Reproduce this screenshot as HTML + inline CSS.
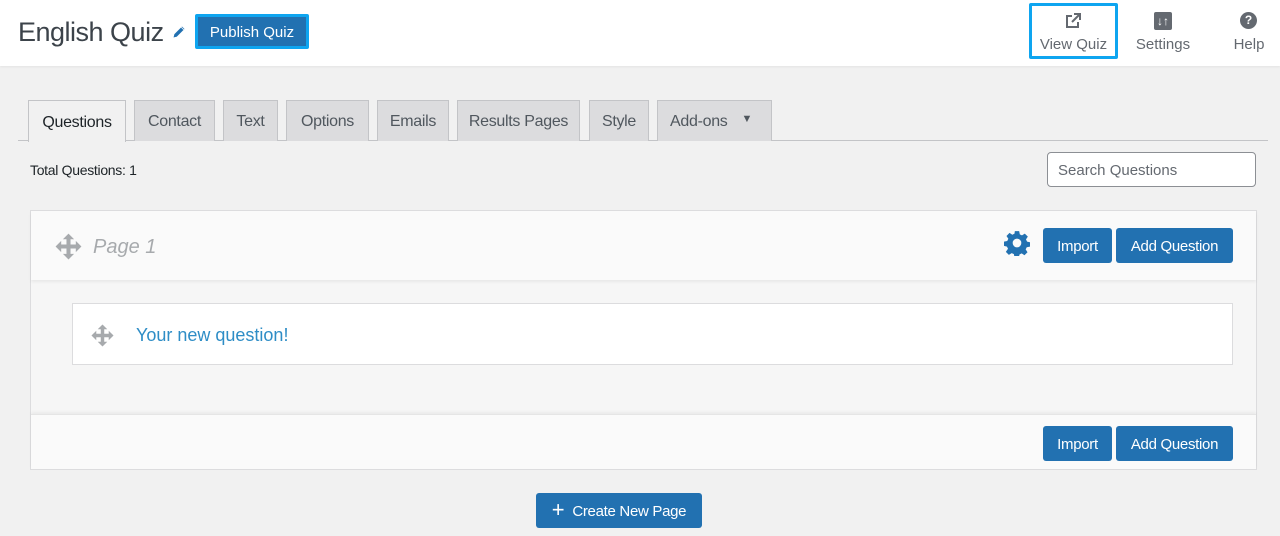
<!DOCTYPE html>
<html><head><meta charset="utf-8"><style>
*{box-sizing:border-box;margin:0;padding:0}
body{width:1280px;height:536px;background:#f1f1f1;font-family:"Liberation Sans",sans-serif;position:relative;overflow:hidden;color:#3c434a}
.a{position:absolute}
.hdr{left:0;top:0;width:1280px;height:66px;background:#fff;box-shadow:0 1px 2px rgba(0,0,0,.06)}
.tab{position:absolute;top:100px;height:41px;background:#dcdcde;border:1px solid #c3c4c7;border-bottom:none;font-size:16px;color:#50575e;display:flex;align-items:center;justify-content:center;letter-spacing:-0.3px;padding-top:2px}
.btn{position:absolute;background:#2271b1;color:#fff;border-radius:3px;font-size:15px;display:flex;align-items:center;justify-content:center;letter-spacing:-0.3px;padding-top:2px}
.hi{position:absolute;text-align:center;font-size:15px;color:#646970}
</style></head><body>
<div class="a hdr"></div>
<div class="a" style="left:18px;top:17px;font-size:27px;color:#3c434a;letter-spacing:-0.5px">English Quiz</div>
<svg class="a" style="left:171px;top:24px" width="16" height="16" viewBox="0 0 16 16"><path d="M2 14l1-4 8-8 3 3-8 8z M10 3l3 3" fill="#2271b1" stroke="#fff" stroke-width="0.8"/></svg>
<div class="a" style="left:195px;top:14px;width:114px;height:35px;border:3px solid #0ea5f0;border-radius:2px;background:#2271b1;color:#fff;font-size:15px;display:flex;align-items:center;justify-content:center;padding-top:2px">Publish Quiz</div>
<div class="a" style="left:1029px;top:3px;width:89px;height:56px;border:3px solid #0ea5f0;border-radius:2px"></div>
<svg class="a" style="left:1064px;top:12px" width="18" height="18" viewBox="0 0 18 18"><path d="M8 4H3v11h11v-5" fill="none" stroke="#646970" stroke-width="2"/><path d="M10 2h6v6M16 2l-8 8" fill="none" stroke="#646970" stroke-width="2"/></svg>
<div class="hi" style="left:1030px;top:36px;width:87px">View Quiz</div>
<div class="a" style="left:1154px;top:12px;width:18px;height:18px;background:#646970;border-radius:2px;color:#fff;font-size:12px;text-align:center;line-height:18px;font-weight:bold">↓↑</div>
<div class="hi" style="left:1122px;top:36px;width:82px">Settings</div>
<div class="a" style="left:1240px;top:12px;width:17px;height:17px;background:#646970;border-radius:50%;color:#fff;font-size:12px;text-align:center;line-height:17px;font-weight:bold">?</div>
<div class="hi" style="left:1220px;top:36px;width:58px">Help</div>

<div class="a" style="left:18px;top:140px;width:1250px;height:1px;background:#c3c4c7"></div>
<div class="tab" style="left:28px;width:98px;background:#f1f1f1;color:#1d2327;height:42px">Questions</div>
<div class="tab" style="left:134px;width:81px">Contact</div>
<div class="tab" style="left:223px;width:55px">Text</div>
<div class="tab" style="left:286px;width:83px">Options</div>
<div class="tab" style="left:377px;width:72px">Emails</div>
<div class="tab" style="left:457px;width:123px">Results Pages</div>
<div class="tab" style="left:589px;width:60px">Style</div>
<div class="tab" style="left:657px;width:115px;justify-content:flex-start;padding-left:12px">Add-ons <span style="font-size:11px;margin-left:14px;margin-top:-6px">▼</span></div>

<div class="a" style="left:30px;top:162px;font-size:14px;color:#1d2327;letter-spacing:-0.3px">Total Questions: 1</div>
<div class="a" style="left:1047px;top:152px;width:209px;height:35px;background:#fff;border:1px solid #8c8f94;border-radius:4px;font-size:15px;color:#646970;padding:9px 10px">Search Questions</div>

<div class="a" style="left:30px;top:210px;width:1227px;height:260px;background:#f6f6f6;border:1px solid #dcdcde"></div>
<div class="a" style="left:31px;top:211px;width:1225px;height:69px;background:#fafafa;box-shadow:0 2px 3px rgba(0,0,0,.06)"></div>
<svg class="a" style="left:55px;top:233px" width="27" height="27" viewBox="0 0 24 24"><path d="M12 0.5l5 5h-3.2v4.7h4.7V7l5 5-5 5v-3.2h-4.7v4.7H17l-5 5-5-5h3.2v-4.7H5.5V17l-5-5 5-5v3.2h4.7V5.5H7z" fill="#a7aaad"/></svg>
<div class="a" style="left:93px;top:236px;font-size:20px;font-style:italic;color:#a7aaad">Page 1</div>
<svg class="a" style="left:1004px;top:230px" width="26" height="26" viewBox="0 0 24 24"><path fill="#2271b1" fill-rule="evenodd" d="M10 1h4l.6 3 2 1 2.6-1.7 2.8 2.8L20.3 8.7l1 2 2.7.6v4l-3 .6-1 2 1.7 2.6-2.8 2.8-2.6-1.7-2 1-.6 2.7h-4l-.6-3-2-1-2.6 1.7-2.8-2.8L3.7 17.3l-1-2L0 14.7v-4l3-.6 1-2L2.3 5.5l2.8-2.8L7.7 4.4l2-1zM12 8a4 4 0 100 8 4 4 0 000-8z"/></svg>
<div class="btn" style="left:1043px;top:228px;width:69px;height:35px">Import</div>
<div class="btn" style="left:1116px;top:228px;width:117px;height:35px">Add Question</div>

<div class="a" style="left:72px;top:303px;width:1161px;height:62px;background:#fff;border:1px solid #dcdcde"></div>
<svg class="a" style="left:91px;top:324px" width="23" height="23" viewBox="0 0 24 24"><path d="M12 0.5l5 5h-3.2v4.7h4.7V7l5 5-5 5v-3.2h-4.7v4.7H17l-5 5-5-5h3.2v-4.7H5.5V17l-5-5 5-5v3.2h4.7V5.5H7z" fill="#a7aaad"/></svg>
<div class="a" style="left:136px;top:325px;font-size:18px;color:#2e8dc6">Your new question!</div>

<div class="a" style="left:31px;top:414px;width:1225px;height:55px;background:#fafafa;border-top:1px solid #e5e5e5;box-shadow:0 -2px 3px rgba(0,0,0,.05)"></div>
<div class="btn" style="left:1043px;top:426px;width:69px;height:35px">Import</div>
<div class="btn" style="left:1116px;top:426px;width:117px;height:35px">Add Question</div>

<div class="btn" style="left:536px;top:493px;width:166px;height:35px"><span style="font-size:22px;margin-right:8px;margin-top:-3px">+</span>Create New Page</div>
</body></html>
